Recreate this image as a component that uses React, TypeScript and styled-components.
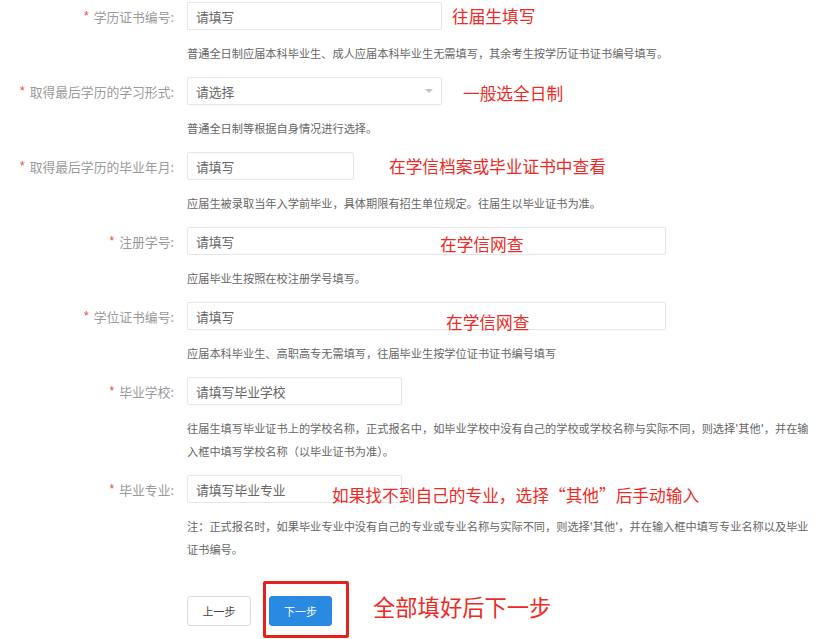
import React from 'react';
import styled, { createGlobalStyle } from 'styled-components';

const GlobalStyle = createGlobalStyle`
  html, body { margin: 0; padding: 0; background: #fff; }
  body { font-family: "Noto Sans CJK SC", "Noto Sans", sans-serif; }
  * { box-sizing: border-box; }
`;

const Page = styled.div`
  width: 840px;
  height: 639px;
  overflow: hidden;
  padding-top: 2px;
  background: #fff;
`;

const Form = styled.div`
  display: flex;
  flex-direction: column;
  gap: 12px;
`;

const FormItem = styled.div`
  display: grid;
  grid-template-columns: 187px 1fr;
  row-gap: 12px;
`;

const Label = styled.label`
  height: 28px;
  display: flex;
  align-items: center;
  justify-content: flex-end;
  padding-right: 13px;
  font-size: 12.8px;
  color: #9a9a9a;
  white-space: nowrap;
`;

const Required = styled.span`
  color: #f0443e;
  font-size: 12px;
  margin-right: 5px;
  font-family: "Liberation Sans", sans-serif;
`;

const Control = styled.div`
  position: relative;
  height: 28px;
  display: flex;
  align-items: center;
`;

const TextInput = styled.input<{ $w: number }>`
  width: ${p => p.$w}px;
  height: 28px;
  border: 1px solid #e6e6e6;
  border-radius: 2px;
  padding: 0 8px;
  font-family: inherit;
  font-size: 12.8px;
  color: #666;
  outline: none;
  background: #fff;
  &::placeholder { color: #666; }
`;

const SelectBox = styled.div<{ $w: number }>`
  width: ${p => p.$w}px;
  height: 28px;
  border: 1px solid #e6e6e6;
  border-radius: 2px;
  padding: 0 8px;
  display: flex;
  align-items: center;
  justify-content: space-between;
  font-size: 12.8px;
  color: #666;
  background: #fff;
`;

const Arrow = styled.span`
  width: 0;
  height: 0;
  border-left: 4px solid transparent;
  border-right: 4px solid transparent;
  border-top: 4px solid #c4c4c4;
`;

const Help = styled.p`
  grid-column: 2;
  margin: 0;
  max-width: 626px;
  font-size: 11.2px;
  line-height: 23px;
  color: #666;
`;

const Callout = styled.span<{ $left: number; $cy: number }>`
  position: absolute;
  left: ${p => p.$left}px;
  top: ${p => p.$cy - 10}px;
  line-height: 20px;
  font-size: 16.7px;
  color: #ec2b26;
  white-space: nowrap;
  pointer-events: none;
`;

const Quote = styled.span`
  font-feature-settings: "fwid" 1;
`;

const Actions = styled.div`
  display: flex;
  align-items: center;
  gap: 18px;
  margin-top: 31px;
  padding-left: 187px;
`;

const Button = styled.button<{ $primary?: boolean }>`
  width: ${p => (p.$primary ? 63 : 64)}px;
  height: 30px;
  border-radius: 3px;
  font-family: inherit;
  font-size: 11px;
  cursor: pointer;
  border: 1px solid ${p => (p.$primary ? '#2a8ae2' : '#dcdcdc')};
  background: ${p => (p.$primary ? '#2a8ae2' : '#fff')};
  color: ${p => (p.$primary ? '#fff' : '#444')};
`;

const HighlightWrap = styled.div`
  position: relative;
  display: flex;
`;

const Highlight = styled.span`
  position: absolute;
  left: -6px;
  top: -15px;
  width: 86px;
  height: 57px;
  border: 3px solid #e3221f;
  border-radius: 2px;
  pointer-events: none;
`;

const BigCallout = styled.span`
  margin-left: 23px;
  margin-bottom: 10px;
  font-size: 22.3px;
  line-height: 28px;
  color: #ec2b26;
  white-space: nowrap;
`;

const Divider = styled.div`
  margin: 13px 0 0 13px;
  width: 799px;
  height: 1px;
  background: #eeeeee;
`;

type Field = {
  label: string;
  kind: 'input' | 'select';
  width: number;
  placeholder: string;
  help: React.ReactNode;
  note?: { text: React.ReactNode; left: number; cy: number };
};

const fields: Field[] = [
  {
    label: '学历证书编号',
    kind: 'input',
    width: 255,
    placeholder: '请填写',
    help: '普通全日制应届本科毕业生、成人应届本科毕业生无需填写，其余考生按学历证书证书编号填写。',
    note: { text: '往届生填写', left: 265, cy: 14 },
  },
  {
    label: '取得最后学历的学习形式',
    kind: 'select',
    width: 255,
    placeholder: '请选择',
    help: '普通全日制等根据自身情况进行选择。',
    note: { text: '一般选全日制', left: 276, cy: 16 },
  },
  {
    label: '取得最后学历的毕业年月',
    kind: 'input',
    width: 167,
    placeholder: '请填写',
    help: '应届生被录取当年入学前毕业，具体期限有招生单位规定。往届生以毕业证书为准。',
    note: { text: '在学信档案或毕业证书中查看', left: 202, cy: 14 },
  },
  {
    label: '注册学号',
    kind: 'input',
    width: 479,
    placeholder: '请填写',
    help: '应届毕业生按照在校注册学号填写。',
    note: { text: '在学信网查', left: 253, cy: 17 },
  },
  {
    label: '学位证书编号',
    kind: 'input',
    width: 479,
    placeholder: '请填写',
    help: '应届本科毕业生、高职高专无需填写，往届毕业生按学位证书证书编号填写',
    note: { text: '在学信网查', left: 259, cy: 20 },
  },
  {
    label: '毕业学校',
    kind: 'input',
    width: 215,
    placeholder: '请填写毕业学校',
    help: "往届生填写毕业证书上的学校名称，正式报名中，如毕业学校中没有自己的学校或学校名称与实际不同，则选择'其他'，并在输入框中填写学校名称（以毕业证书为准）。",
  },
  {
    label: '毕业专业',
    kind: 'input',
    width: 215,
    placeholder: '请填写毕业专业',
    help: "注：正式报名时，如果毕业专业中没有自己的专业或专业名称与实际不同，则选择'其他'，并在输入框中填写专业名称以及毕业证书编号。",
    note: {
      text: (
        <>
          如果找不到自己的专业，选择<Quote>“</Quote>其他<Quote>”</Quote>后手动输入
        </>
      ),
      left: 145,
      cy: 20,
    },
  },
];

export default function App() {
  return (
    <Page>
      <GlobalStyle />
      <Form>
        {fields.map(f => (
          <FormItem key={f.label}>
            <Label>
              <Required>*</Required>
              {f.label}:
            </Label>
            <Control>
              {f.kind === 'select' ? (
                <SelectBox $w={f.width}>
                  <span>{f.placeholder}</span>
                  <Arrow />
                </SelectBox>
              ) : (
                <TextInput $w={f.width} placeholder={f.placeholder} />
              )}
              {f.note && (
                <Callout $left={f.note.left} $cy={f.note.cy}>
                  {f.note.text}
                </Callout>
              )}
            </Control>
            <Help>{f.help}</Help>
          </FormItem>
        ))}
      </Form>
      <Actions>
        <Button>上一步</Button>
        <HighlightWrap>
          <Button $primary>下一步</Button>
          <Highlight />
        </HighlightWrap>
        <BigCallout>全部填好后下一步</BigCallout>
      </Actions>
      <Divider />
    </Page>
  );
}
